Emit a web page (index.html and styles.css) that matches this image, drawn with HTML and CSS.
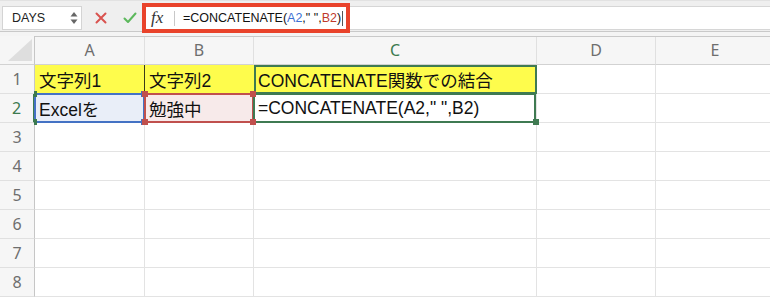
FILE: index.html
```html
<!DOCTYPE html>
<html lang="ja">
<head>
<meta charset="utf-8">
<title>CONCATENATE</title>
<link rel="stylesheet" href="styles.css">
</head>
<body>
<div class="toolbar">
  <div class="namebox">
    <span class="name">DAYS</span>
    <svg class="spin" width="8" height="14" viewBox="0 0 8 14"><path d="M4 1 L7.5 5.5 H0.5 Z" fill="#666"/><path d="M4 13 L7.5 8.5 H0.5 Z" fill="#666"/></svg>
  </div>
  <div class="actions">
    <svg width="12" height="12" viewBox="0 0 12 12"><path d="M1.5 1.5 L10.5 10.5 M10.5 1.5 L1.5 10.5" stroke="#d9534f" stroke-width="2" stroke-linecap="round"/></svg>
    <svg width="14" height="12" viewBox="0 0 14 12"><path d="M1.5 6.5 L5 10 L12.5 1.5" stroke="#5cb85c" stroke-width="2" fill="none" stroke-linecap="round" stroke-linejoin="round"/></svg>
  </div>
  <div class="fbar">
    <div class="annot">
      <span class="fx">fx</span>
      <span class="sep"></span>
      <span class="ftext">=CONCATENATE(<span class="ref-a">A2</span>," ",<span class="ref-b">B2</span>)</span><span class="caret"></span>
    </div>
  </div>
</div>
<div class="sheet">
  <div class="corner"><span class="tri"></span></div>
  <div class="colh">A</div>
  <div class="colh">B</div>
  <div class="colh act">C</div>
  <div class="colh">D</div>
  <div class="colh">E</div>

  <div class="rowh">1</div>
  <div class="cell yel a1">文字列1</div>
  <div class="cell yel b1">文字列2</div>
  <div class="cell yel c1">CONCATENATE関数での結合</div>
  <div class="cell"></div>
  <div class="cell"></div>

  <div class="rowh act">2</div>
  <div class="cell ref-blue">Excelを<span class="h tl"></span><span class="h tr"></span><span class="h bl"></span><span class="h br"></span></div>
  <div class="cell ref-red">勉強中<span class="h tl"></span><span class="h tr"></span><span class="h bl"></span><span class="h br"></span></div>
  <div class="cell active">=CONCATENATE(A2," ",B2)<span class="h br"></span></div>
  <div class="cell"></div>
  <div class="cell"></div>

  <div class="rowh">3</div><div class="cell"></div><div class="cell"></div><div class="cell"></div><div class="cell"></div><div class="cell"></div>
  <div class="rowh">4</div><div class="cell"></div><div class="cell"></div><div class="cell"></div><div class="cell"></div><div class="cell"></div>
  <div class="rowh">5</div><div class="cell"></div><div class="cell"></div><div class="cell"></div><div class="cell"></div><div class="cell"></div>
  <div class="rowh">6</div><div class="cell"></div><div class="cell"></div><div class="cell"></div><div class="cell"></div><div class="cell"></div>
  <div class="rowh">7</div><div class="cell"></div><div class="cell"></div><div class="cell"></div><div class="cell"></div><div class="cell"></div>
  <div class="rowh">8</div><div class="cell"></div><div class="cell"></div><div class="cell"></div><div class="cell"></div><div class="cell"></div>
</div>
</body>
</html>
```

FILE: styles.css
```css
* { box-sizing: border-box; }
html, body { margin: 0; padding: 0; }
body {
  width: 770px;
  height: 297px;
  overflow: hidden;
  background: #fff;
  font-family: "Liberation Sans", Arial, sans-serif;
}

.toolbar {
  height: 36px;
  background: #efefef;
  display: flex;
  align-items: flex-start;
  padding-top: 5px;
  border-top: 1px solid #e2e2e2;
  position: relative;
}
.toolbar::after {
  content: "";
  position: absolute;
  left: 0; right: 0; top: 30px;
  height: 4px;
  border-top: 1px solid #c9c9c9;
  border-bottom: 1px solid #c9c9c9;
  background: #f4f4f4;
}

.namebox {
  margin-left: 2px;
  width: 80px;
  height: 24px;
  background: #fff;
  border: 1px solid #d4d4d4;
  display: flex;
  align-items: center;
  justify-content: space-between;
  padding: 0 3px 0 9px;
}
.name { font-size: 12.5px; color: #222; }
.spin { display: block; }

.actions {
  width: 64px;
  height: 24px;
  display: flex;
  align-items: center;
  gap: 16px;
  padding-left: 13px;
}
.actions svg { display: block; }

.fbar {
  flex: 1;
  height: 24px;
  background: #fff;
  border-top: 1px solid #d6d6d6;
  border-bottom: 1px solid #d6d6d6;
  display: flex;
  align-items: center;
}
.annot {
  width: 200px;
  height: 100%;
  display: flex;
  align-items: center;
  outline: 4px solid #e9432b;
  outline-offset: 0;
  position: relative;
  z-index: 2;
}
.fx {
  font-family: "Liberation Serif", "Times New Roman", serif;
  font-style: italic;
  font-size: 17px;
  color: #333;
  padding-left: 5px;
  width: 28px;
}
.sep {
  width: 1px;
  height: 15px;
  background: #c8c8c8;
  margin-right: 8px;
}
.ftext { font-size: 12.5px; color: #111; }
.ref-a { color: #3b6fd3; }
.ref-b { color: #c0392b; }
.caret {
  width: 1px;
  height: 15px;
  background: #555;
  margin-left: 1px;
}

.sheet {
  display: grid;
  grid-template-columns: 35px 110px 109px 283px 119px 119px;
  grid-auto-rows: 29px;
  font-family: "Liberation Sans", "Noto Sans CJK JP", sans-serif;
}

.corner {
  background: #f6f6f6;
  border-right: 1px solid #c6c6c6;
  border-bottom: 1px solid #d2d2d2;
  position: relative;
}
.tri {
  position: absolute;
  right: 2px;
  bottom: 3px;
  width: 0; height: 0;
  border-left: 24px solid transparent;
  border-bottom: 22px solid #dedede;
}
.colh {
  background: #f6f6f6;
  border-right: 1px solid #e0e0e0;
  border-bottom: 1px solid #d2d2d2;
  display: flex;
  align-items: center;
  justify-content: center;
  font-family: "Noto Sans", sans-serif;
  font-size: 16px;
  color: #6e6e6e;
}
.colh.act { color: #3c7a4f; }
.rowh {
  background: #f6f6f6;
  border-right: 1px solid #c6c6c6;
  border-bottom: 1px solid #e0e0e0;
  display: flex;
  align-items: center;
  justify-content: center;
  font-family: "Noto Sans", sans-serif;
  font-size: 16px;
  color: #6e6e6e;
}
.rowh.act { color: #3c7a4f; border-right: 2px solid #3c7a4f; }

.cell {
  border-right: 1px solid #e3e3e3;
  border-bottom: 1px solid #e3e3e3;
  display: flex;
  align-items: center;
  padding-left: 4px;
  font-size: 17.5px;
  color: #111;
  white-space: nowrap;
  position: relative;
}
.yel { background: #fefc4c; }
.a1 { border-right: 1px solid #3a3a1a; border-bottom: none; }
.b1 { border-right: none; border-bottom: none; }
.c1 { box-shadow: inset 0 0 0 2px #3f7a52; border-right: none; border-bottom: none; }

.ref-blue { background: #e9eef8; }
.ref-blue::after, .ref-red::after, .active::after {
  content: "";
  position: absolute;
  left: -1px; top: -1px; right: -1px; bottom: -1px;
  border: 2px solid #4472c4;
  pointer-events: none;
}
.ref-red { background: #f7eaea; }
.ref-red::after { border-color: #c0504d; }
.active::after { border-color: #3f7a52; left: -1px; right: 0; }

.h {
  position: absolute;
  width: 6px; height: 6px;
  background: #4472c4;
  z-index: 3;
}
.ref-red .h { background: #c0504d; }
.active .h { background: #3f7a52; }
.h.tl { left: -3px; top: -3px; }
.h.tr { right: -3px; top: -3px; }
.h.bl { left: -3px; bottom: -3px; }
.h.br { right: -3px; bottom: -3px; }
.ref-blue .h.tl, .ref-blue .h.bl { background: #3c7a4f; width: 3px; left: -1px; }
```
